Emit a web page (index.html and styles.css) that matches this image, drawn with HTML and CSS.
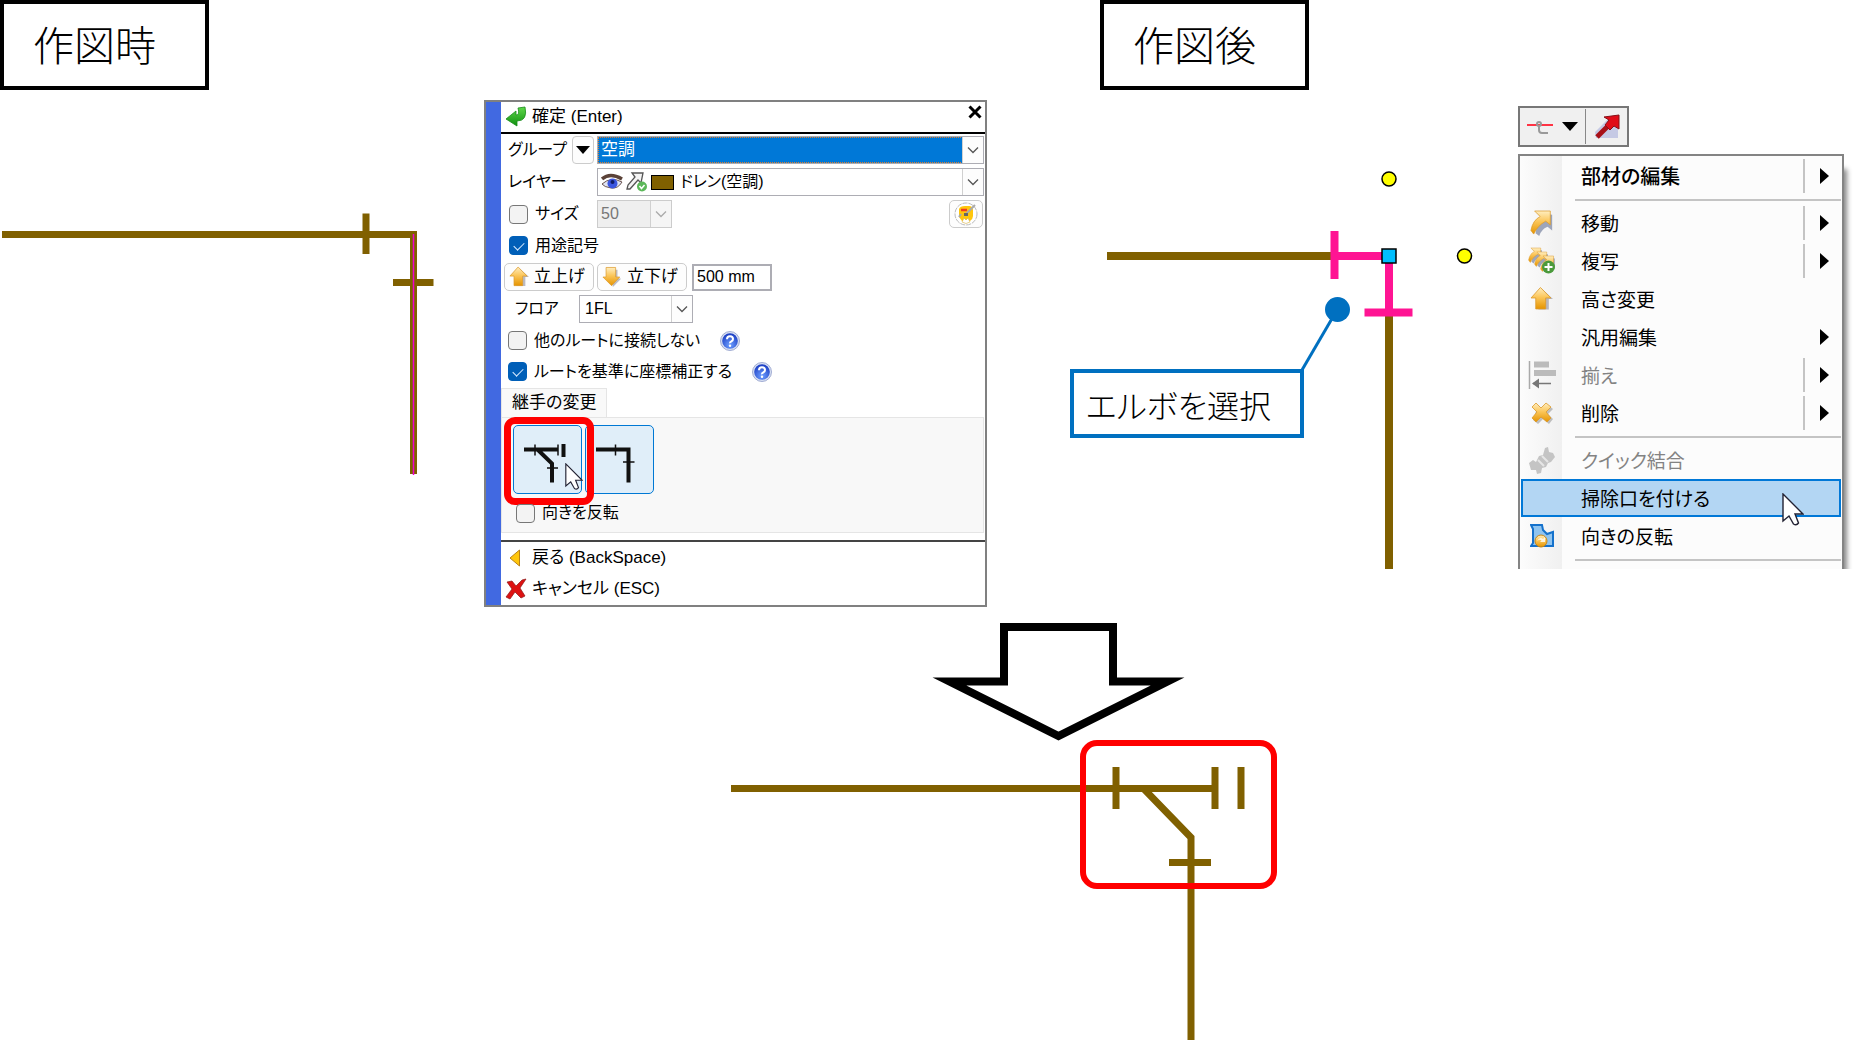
FILE: index.html
```html
<!DOCTYPE html>
<html lang="ja">
<head>
    <meta charset="UTF-8">
    <meta name="viewport" content="width=device-width, initial-scale=1.0">
    <title>掃除口を付ける</title>
    <link rel="stylesheet" href="styles.css">
</head>
<body>
    <!-- shared icons -->
    <svg class="defs" width="0" height="0">
        <defs>
            <linearGradient id="gold" x1="0" y1="0" x2="0" y2="1">
                <stop offset="0" stop-color="#ffeec0"/>
                <stop offset="0.45" stop-color="#fbc65a"/>
                <stop offset="1" stop-color="#e59400"/>
            </linearGradient>
            <linearGradient id="green" x1="0" y1="0" x2="0" y2="1">
                <stop offset="0" stop-color="#5fd84a"/>
                <stop offset="1" stop-color="#109010"/>
            </linearGradient>
            <radialGradient id="blue" cx="0.5" cy="0.75" r="0.7">
                <stop offset="0" stop-color="#6fa0ff"/>
                <stop offset="1" stop-color="#1c3fc4"/>
            </radialGradient>
            <symbol id="chevron" viewBox="0 0 12 8"><path d="M1 1.5l5 5 5-5" fill="none" stroke="currentColor" stroke-width="1.3"/></symbol>
            <symbol id="up" viewBox="0 0 22 24">
                <path d="M12 3l10 9h-4v10h-10z" fill="#8d8d9c" opacity="0.6"/>
                <path d="M10 1L1 11h4.500v10.500h9.500V11H20z" fill="url(#gold)" stroke="#dc9a2c" stroke-width="0.8"/>
            </symbol>
            <symbol id="down" viewBox="0 0 22 24">
                <path d="M8 4h9v9l4 1-9 9z" fill="#8d8d9c" opacity="0.6"/>
                <path d="M4.500 1.500H15V12h4.500L10.500 21.500 1 12h3.500z" fill="url(#gold)" stroke="#dc9a2c" stroke-width="0.8"/>
            </symbol>
            <symbol id="swoosh" viewBox="0 0 26 28">
                <path d="M7 3l17 2v17l-5-4q-7 3-9 10l-4-3q1-12 8-16z" fill="#8791ab" opacity="0.8"/>
                <path d="M5 1h17v15l-5-4Q8 17 4 26L1 22Q3 11 11 7z" fill="url(#gold)" stroke="#dc9a2c" stroke-width="0.8"/>
            </symbol>
            <symbol id="help" viewBox="0 0 20 20">
                <circle cx="10" cy="10" r="9.500" fill="#d9e0f4" stroke="#8d9bc8" stroke-width="0.8"/>
                <circle cx="10" cy="10" r="7.800" fill="url(#blue)"/>
                <path d="M7 8.200Q7 5.200 10 5.200T13 8q0 1.600-1.600 2.400T10 12.300" fill="none" stroke="#fff" stroke-width="2"/>
                <circle cx="10" cy="14.800" r="1.200" fill="#fff"/>
            </symbol>
            <symbol id="cursor" viewBox="0 0 22 34">
                <path d="M1 1v27l6-5 4.500 8q3 2 5-1l-3.500-9H21z" fill="#fff" stroke="#223" stroke-width="1.400"/>
            </symbol>
        </defs>
    </svg>

    <main class="page">
        <div class="top">
            <section class="before">
                <div class="drawing-col">
                    <h2 class="title">作図時</h2>
                    <svg class="pipe-before" width="440" height="385" viewBox="0 90 440 385">
                        <path class="pipe" d="M2 234.500H417M413.500 231V474M366 213.500v40.500M393 282.500h40.500"/>
                        <path d="M413.500 234v241" stroke="#f000d0" stroke-width="1.500"/>
                    </svg>
                </div>

                <form class="dialog">
                    <div class="dialog-bar"></div>
                    <div class="dialog-main">
                        <div class="dialog-head">
                            <button type="button" class="command">
                                <svg width="22" height="22" viewBox="0 0 22 22"><path d="M13 2l7-1q3 14-8 14v5L1 13l10-8v4q4 0 2-7z" fill="url(#green)" stroke="#178a18" stroke-width="0.8"/></svg>
                                確定 (Enter)
                            </button>
                            <button type="button" class="close" aria-label="閉じる">
                                <svg width="14" height="14" viewBox="0 0 14 14"><path d="M1.500 1.500l11 11M12.500 1.500l-11 11" stroke="#000" stroke-width="3"/></svg>
                            </button>
                        </div>

                        <div class="fields">
                            <div class="row">
                                <label class="name" for="group">グループ</label>
                                <button type="button" class="mini" aria-label="グループ一覧">
                                    <svg width="14" height="8" viewBox="0 0 14 8"><path d="M0 0h14L7 8z"/></svg>
                                </button>
                                <div class="combo combo-selected">
                                    <select id="group"><option>空調</option></select>
                                    <svg class="chev" width="12" height="8"><use href="#chevron"/></svg>
                                </div>
                            </div>
                            <div class="row">
                                <label class="name wide" for="layer">レイヤー</label>
                                <div class="combo combo-layer">
                                    <select id="layer"><option>ドレン(空調)</option></select>
                                    <span class="layer-icons">
                                        <svg width="22" height="18" viewBox="0 0 22 18">
                                            <path d="M1 6Q9-1 21 6" fill="none" stroke="#5b4238" stroke-width="3.500"/>
                                            <path d="M1 11Q10 3 21 9q-4 7-11 6T1 11z" fill="#dfe3f2" stroke="#6b5550"/>
                                            <circle cx="11.500" cy="10.500" r="5" fill="#3b56e0"/><circle cx="11.500" cy="9" r="2" fill="#101c66"/>
                                        </svg>
                                        <svg width="22" height="20" viewBox="0 0 22 20">
                                            <path d="M6 1h11l-2 10-3-3-8 9H1l1-4 7-8z" fill="#f4f4f4" stroke="#555" stroke-width="1.300"/>
                                            <circle cx="16" cy="14.500" r="5" fill="#5cb85a"/><path d="M13.500 14l2 2.500 3-3.500" fill="none" stroke="#fff" stroke-width="1.500"/>
                                        </svg>
                                        <i class="swatch"></i>
                                    </span>
                                    <svg class="chev" width="12" height="8"><use href="#chevron"/></svg>
                                </div>
                            </div>
                            <div class="row">
                                <label class="check size-check"><input type="checkbox">サイズ</label>
                                <div class="combo combo-size">
                                    <select disabled aria-label="サイズ"><option>50</option></select>
                                    <svg class="chev" width="12" height="8"><use href="#chevron"/></svg>
                                </div>
                                <button type="button" class="tool" aria-label="設定">
                                    <svg width="24" height="24" viewBox="0 0 24 24">
                                        <circle cx="12" cy="12" r="11" fill="#fff" stroke="#bbb" stroke-dasharray="5 1"/>
                                        <path d="M5 7q1-3 6-3h4q4 0 4 4v6q0 3-3 5H8l-3-4z" fill="#ffc60c"/>
                                        <path d="M8 20l2-4 2 2 2-2 2 4q-4 3-8 0z" fill="#fff" stroke="#d8b040" stroke-width="0.600"/>
                                        <path d="M7 8h6" stroke="#f03a20" stroke-width="2.500"/>
                                        <path d="M5 15l2-3M12 12L21 3" stroke="#aaa" stroke-width="2"/><path d="M10 11h4v3h-4z" fill="#666"/>
                                    </svg>
                                </button>
                            </div>
                            <div class="row row-check">
                                <label class="check"><input type="checkbox" checked>用途記号</label>
                            </div>
                            <div class="row row-buttons">
                                <button type="button" class="raise"><svg width="20" height="22"><use href="#up"/></svg>立上げ</button>
                                <button type="button" class="raise"><svg width="20" height="22"><use href="#down"/></svg>立下げ</button>
                                <input type="text" class="length" value="500 mm" aria-label="長さ">
                            </div>
                            <div class="row row-floor">
                                <label class="name" for="floor">フロア</label>
                                <div class="combo combo-floor">
                                    <select id="floor"><option>1FL</option></select>
                                    <svg class="chev" width="12" height="8"><use href="#chevron"/></svg>
                                </div>
                            </div>
                            <div class="row row-check row-help">
                                <label class="check"><input type="checkbox">他のルートに接続しない</label>
                                <svg width="20" height="20"><use href="#help"/></svg>
                            </div>
                            <div class="row row-check row-help">
                                <label class="check"><input type="checkbox" checked>ルートを基準に座標補正する</label>
                                <svg width="20" height="20"><use href="#help"/></svg>
                            </div>
                        </div>

                        <button type="button" class="tab">継手の変更</button>
                        <div class="panel">
                            <div class="joints">
                                <button type="button" class="joint" aria-label="掃除口付き">
                                    <svg width="66" height="66" viewBox="0 0 66 66" fill="none" stroke="#111">
                                        <path d="M10 22.500h34M24 23l14 13.500v19" stroke-width="4"/>
                                        <path d="M49.500 17v13" stroke-width="4"/>
                                        <path d="M21 17.500v11M44 17.500v11M33 41h11" stroke-width="1.500"/>
                                    </svg>
                                </button>
                                <button type="button" class="joint" aria-label="エルボ">
                                    <svg width="66" height="66" viewBox="0 0 66 66" fill="none" stroke="#111">
                                        <path d="M10 22.500h32.500v33" stroke-width="4"/>
                                        <path d="M29.500 17.500v11M37 35h11.500" stroke-width="1.500"/>
                                    </svg>
                                </button>
                                <span class="red-frame"></span>
                                <svg class="joint-cursor" width="18" height="28"><use href="#cursor"/></svg>
                            </div>
                            <label class="check"><input type="checkbox">向きを反転</label>
                        </div>

                        <div class="dialog-foot">
                            <button type="button" class="command">
                                <svg width="22" height="22" viewBox="0 0 22 22"><path d="M14.500 3v16L5 11z" fill="#ffc60c" stroke="#b98218"/></svg>
                                戻る (BackSpace)
                            </button>
                            <button type="button" class="command">
                                <svg width="22" height="22" viewBox="0 0 22 22"><path d="M2 4l5-1 4 5 6-6 4-1-6 9 5 8-4 2-6-6-5 7-4-2 6-8z" fill="#dd1212" stroke="#8d1515" stroke-width="0.700"/></svg>
                                キャンセル (ESC)
                            </button>
                        </div>
                    </div>
                </form>
            </section>

            <section class="after">
                <div class="drawing-col">
                    <h2 class="title title-after">作図後</h2>
                    <div class="canvas">
                        <svg width="440" height="479" viewBox="0 90 440 479">
                            <path d="M37 256H265M319 315V569" stroke="#806000" stroke-width="8"/>
                            <path d="M264.500 231v48M265 256H319M319 256v56M294.500 312.500h48" stroke="#ff1493" stroke-width="8"/>
                            <circle cx="319" cy="179" r="7" fill="#ff0" stroke="#000" stroke-width="1.500"/>
                            <circle cx="394.500" cy="256" r="7" fill="#ff0" stroke="#000" stroke-width="1.500"/>
                            <rect x="312" y="249" width="14" height="14" fill="#00bfff" stroke="#000" stroke-width="1.500"/>
                            <path d="M232 370l35-60" stroke="#0070c0" stroke-width="3"/>
                            <circle cx="267.500" cy="309.500" r="12.500" fill="#0070c0"/>
                        </svg>
                        <p class="callout">エルボを選択</p>
                    </div>
                </div>

                <div class="menu-col">
                    <div class="toolbar">
                        <button type="button" class="route" aria-label="ルート">
                            <svg width="26" height="20" viewBox="0 0 26 20" fill="none" stroke="#999" stroke-width="2">
                                <path d="M0 8h26" stroke="#f34" stroke-width="2"/><path d="M12 9v4q0 3 3 3h6"/><circle cx="12" cy="7" r="2"/>
                            </svg>
                            <svg width="16" height="10" viewBox="0 0 16 10"><path d="M0 0h16L8 9z"/></svg>
                        </button>
                        <button type="button" class="pointer" aria-label="選択">
                            <svg width="28" height="26" viewBox="0 0 28 26">
                                <path d="M2 18L16 4l9 4v16H3z" fill="#c5c9e4"/>
                                <path d="M4 23L17 10" stroke="#a81018" stroke-width="5"/><path d="M11 3l15-2v14l-5-3-4 4-5-5 4-5z" fill="#e00c18" stroke="#861018"/>
                            </svg>
                        </button>
                    </div>
                    <ul class="menu">
                        <li><button class="item strong"><span class="ico"></span>部材の編集<i class="split"></i><i class="arrow"></i></button></li>
                        <li class="sep"></li>
                        <li><button class="item"><span class="ico"><svg width="24" height="28"><use href="#swoosh"/></svg></span>移動<i class="split"></i><i class="arrow"></i></button></li>
                        <li><button class="item"><span class="ico">
                            <svg width="28" height="28" viewBox="0 0 28 28">
                                <use href="#swoosh" width="15" height="17"/><use href="#swoosh" x="6" y="4" width="15" height="17"/><use href="#swoosh" x="12" y="8" width="16" height="18"/>
                                <circle cx="20.500" cy="20" r="6.500" fill="#4b9a3c"/><path d="M16.500 20h8M20.500 16v8" stroke="#fff" stroke-width="2"/>
                            </svg></span>複写<i class="split"></i><i class="arrow"></i></button></li>
                        <li><button class="item"><span class="ico"><svg width="23" height="26"><use href="#up"/></svg></span>高さ変更</button></li>
                        <li><button class="item"><span class="ico"></span>汎用編集<i class="arrow"></i></button></li>
                        <li><button class="item" disabled><span class="ico">
                            <svg width="28" height="28" viewBox="0 0 28 28"><path d="M1.500 0v28" stroke="#aaa" stroke-width="1.500"/><path d="M6 3.500h15M6 12h22" stroke="#bbb" stroke-width="6"/><path d="M5 22.500h18" stroke="#777" stroke-width="1.500"/><path d="M4 22.500l7-5v10z" fill="#777"/></svg>
                            </span>揃え<i class="split"></i><i class="arrow"></i></button></li>
                        <li><button class="item"><span class="ico">
                            <svg width="22" height="22" viewBox="0 0 22 22"><path d="M7 3l5 5 5-5 5 4-5 5 5 5-4 5-6-5-5 5-5-4z" fill="#999" opacity="0.6"/><path d="M5 1l5 5 5-5 5 4-5 5 5 6-4 4-6-5-5 5-4-4 5-6-5-5z" fill="url(#gold)" stroke="#dc9a2c" stroke-width="0.800"/></svg>
                            </span>削除<i class="split"></i><i class="arrow"></i></button></li>
                        <li class="sep"></li>
                        <li><button class="item" disabled><span class="ico">
                            <svg width="28" height="28" viewBox="0 0 28 28" fill="#c4c4c4"><path d="M1 17l4-3 3 2 3-6 4-1 2-7 3-1 1 5 4 1 2 4-4 5-3 1-2 4-4 1-1 5-4 1-1-4-5 0z"/><path d="M10 14l6 6M14 10l6 6" stroke="#e6e6e6" stroke-width="2"/></svg>
                            </span>クイック結合</button></li>
                        <li><button class="item hot"><span class="ico"></span>掃除口を付ける</button>
                            <svg class="menu-cursor" width="22" height="34"><use href="#cursor"/></svg></li>
                        <li><button class="item"><span class="ico">
                            <svg width="24" height="24" viewBox="0 0 24 24"><path d="M1 1h11l1 5 4 4 6-2v14H1l2-3V5z" fill="#8fc4f0" stroke="#1471cc" stroke-width="2"/><circle cx="11" cy="17" r="6" fill="url(#gold)" stroke="#c88614"/><path d="M7 17q3-5 6-2l2-2v5h-5l1.500-1.500Q10 15 7 17z" fill="#fff" opacity="0.8"/></svg>
                            </span>向きの反転</button></li>
                        <li class="sep"></li>
                    </ul>
                </div>
            </section>
        </div>

        <section class="result">
            <svg class="big-arrow" width="256" height="120" viewBox="930 621 256 120">
                <path d="M1004 626h109v54.500h54.500L1058.500 735 949.500 680.500H1004z" fill="#fff" stroke="#000" stroke-width="8" stroke-miterlimit="10"/>
            </svg>
            <svg class="pipe-result" width="548" height="302" viewBox="731 738 548 302">
                <path class="pipe" d="M731 787.500H1216M1143 787l48 49.500V1040M1116 766v42M1215 766v42M1241 766v42M1169 861.500h42"/>
                <rect x="1083" y="742" width="191" height="143" rx="14" fill="none" stroke="#f00" stroke-width="6"/>
            </svg>
        </section>
    </main>
</body>
</html>
```
FILE: styles.css
```css
* {
    box-sizing: border-box;
}
body {
    margin: 0;
    background: #fff;
    color: #000;
    font-family: "Noto Sans CJK JP", sans-serif;
    font-feature-settings: "palt";
}
button, input, select {
    font: inherit;
    font-feature-settings: inherit;
    color: inherit;
    margin: 0;
}
button {
    white-space: nowrap;
}
svg {
    display: block;
    flex: none;
}
.defs {
    position: absolute;
}
.pipe {
    fill: none;
    stroke: #806000;
    stroke-width: 7;
}

/* page layout */
.top {
    display: grid;
    grid-template-columns: 1070fr 796fr;
}
.before, .after {
    display: flex;
    align-items: flex-start;
}
.drawing-col {
    flex: 1;
}
.title {
    width: 209px;
    height: 90px;
    margin: 0;
    padding-left: 29px;
    border: 4px solid #000;
    font-size: 41px;
    line-height: 78px;
    font-weight: 300;
    font-feature-settings: normal;
}
.title-after {
    margin-left: 30px;
}
.canvas {
    position: relative;
}
.callout {
    position: absolute;
    left: 0;
    top: 279px;
    width: 234px;
    height: 69px;
    margin: 0;
    padding-left: 12px;
    border: 4px solid #0070c0;
    background: #fff;
    font-size: 32px;
    line-height: 62px;
    font-weight: 300;
}

/* dialog */
.dialog {
    display: flex;
    width: 503px;
    margin: 100px 83px 0 0;
    border: 2px solid #808080;
    background: #fff;
    font-family: "Liberation Sans", "Noto Sans CJK JP", sans-serif;
    font-size: 16px;
    line-height: 20px;
}
.dialog-bar {
    width: 15px;
    background: #4169e1;
}
.dialog-main {
    flex: 1;
}
.dialog-head {
    display: flex;
    justify-content: space-between;
    align-items: center;
    height: 32px;
    border-bottom: 2px solid #000;
}
.command {
    display: flex;
    align-items: center;
    gap: 5px;
    height: 31px;
    padding: 0 4px;
    border: 0;
    background: none;
    font-size: 17px;
}
.close {
    align-self: flex-start;
    padding: 3px 3px;
    border: 0;
    background: none;
}
.fields {
    padding: 0 1px 1px 3px;
}
.row {
    display: flex;
    align-items: center;
    height: 32px;
}
.row-check {
    height: 31px;
    padding-left: 5px;
}
.name {
    width: 68px;
    padding-left: 4px;
}
.name.wide {
    width: 93px;
}
.mini {
    display: flex;
    align-items: center;
    justify-content: center;
    width: 22px;
    height: 28px;
    margin-right: 3px;
    padding: 0;
    border: 1px solid #ccc;
    border-radius: 4px;
    background: #fdfdfd;
}
.combo {
    position: relative;
    height: 28px;
}
.combo select {
    display: block;
    width: 100%;
    height: 100%;
    padding: 0 3px;
    border: 1px solid #adadb4;
    border-radius: 0;
    background: #fff;
    appearance: none;
}
.combo::after {
    content: "";
    position: absolute;
    top: 1px;
    right: 1px;
    bottom: 1px;
    width: 20px;
    border-left: 1px solid #d0d0d0;
    background: #fdfdfd;
}
.chev {
    position: absolute;
    z-index: 1;
    right: 5px;
    top: 10px;
    color: #555;
}
.combo-selected, .combo-layer {
    flex: 1;
}
.combo-selected select {
    background: #0078d7;
    color: #fff;
    font-size: 17px;
    outline: 1px dotted #e08030;
    outline-offset: -2px;
}
.combo-layer select {
    padding-left: 82px;
}
.layer-icons {
    position: absolute;
    left: 4px;
    top: 4px;
    display: flex;
    align-items: center;
    gap: 3px;
}
.swatch {
    width: 23px;
    height: 15px;
    border: 1px solid #000;
    background: #806000;
}
.size-check {
    width: 93px;
    padding-left: 5px;
}
.combo-size {
    width: 75px;
}
.combo-size select {
    background: #efefef;
    border-color: #ccc;
    color: #777;
    opacity: 1;
}
.combo-size::after {
    background: #f5f5f5;
}
.combo-size .chev {
    color: #aaa;
}
.tool {
    display: flex;
    align-items: center;
    justify-content: center;
    width: 34px;
    height: 28px;
    margin: 0 1px 0 auto;
    padding: 0;
    border: 1px solid #ccc;
    border-radius: 5px;
    background: #fdfdfd;
}
.check {
    display: flex;
    align-items: center;
    gap: 7px;
}
.check input {
    position: relative;
    width: 19px;
    height: 19px;
    border: 1px solid #777;
    border-radius: 4px;
    background: #f3f3f3;
    appearance: none;
}
.check input:checked {
    border-color: #005fb8;
    background: #005fb8;
}
.check input:checked::after {
    content: "";
    position: absolute;
    left: 4px;
    top: 5px;
    width: 9px;
    height: 5px;
    border: solid #d8ecff;
    border-width: 0 0 1px 1px;
    transform: rotate(-45deg);
}
.row-buttons {
    gap: 3px;
}
.raise {
    display: flex;
    align-items: center;
    gap: 5px;
    width: 90px;
    height: 28px;
    padding: 0 4px;
    border: 1px solid #ccc;
    border-radius: 5px;
    background: #fdfdfd;
    font-size: 17px;
}
.length {
    width: 80px;
    height: 27px;
    margin-left: 2px;
    padding: 0 3px;
    border: 2px solid #adadb4;
}
.row-floor {
    padding-left: 7px;
}
.combo-floor {
    width: 114px;
}
.combo-floor select {
    padding-left: 5px;
}
.row-help {
    gap: 20px;
    padding-left: 4px;
}
.tab {
    display: block;
    width: 106px;
    height: 29px;
    padding: 0 10px;
    border: 1px solid #e5e5e5;
    border-bottom: 0;
    background: #f9f9f9;
    font-size: 17px;
    text-align: left;
}
.panel {
    margin: 0 1px 7px 0;
    padding: 7px 11px 9px;
    border: 1px solid #e5e5e5;
    background: #f8f8f8;
}
.joints {
    position: relative;
    display: flex;
    gap: 3px;
}
.joint {
    width: 69px;
    height: 69px;
    padding: 0;
    border: 1px solid #0078d4;
    border-radius: 5px;
    background: #e0eef9;
}
.red-frame {
    position: absolute;
    left: -9px;
    top: -8px;
    width: 90px;
    height: 88px;
    border: 7px solid #f00;
    border-radius: 11px;
}
.joint-cursor {
    position: absolute;
    left: 52px;
    top: 38px;
}
.panel .check {
    padding: 9px 0 0 3px;
}
.dialog-foot {
    padding-bottom: 1px;
    border-top: 2px solid #444;
}

/* context menu */
.menu-col {
    width: 326px;
    margin: 106px 22px 0 0;
}
.toolbar {
    display: flex;
    align-items: center;
    width: 111px;
    height: 41px;
    margin-bottom: 7px;
    border: 2px solid #777;
    background: #f0f0f0;
}
.toolbar button {
    display: flex;
    align-items: center;
    height: 35px;
    padding: 0 7px;
    border: 0;
    background: none;
}
.route {
    gap: 9px;
}
.toolbar .pointer {
    border-left: 1px solid #888;
}
.menu {
    height: 415px;
    margin: 0;
    padding: 1px 1px 0;
    border: 2px solid #848484;
    border-bottom: 0;
    background: linear-gradient(90deg, #fcfcfc, #f0f0f0) 1px 0 / 41px 100% no-repeat #fcfcfc;
    box-shadow: 8px 10px 5px -5px #888;
    clip-path: inset(0 -12px 0 0);
    font-size: 19px;
    list-style: none;
}
.menu li {
    position: relative;
}
.item {
    display: flex;
    align-items: center;
    width: 100%;
    height: 38px;
    padding: 0 12px 0 0;
    border: 0;
    background: none;
    line-height: 28px;
}
.item:disabled {
    color: #838383;
}
.item.strong {
    font-size: 20px;
    font-weight: 500;
}
.item.hot {
    border: 2px solid #0078d7;
    background: #b3d6f3;
}
.item.hot .ico {
    margin-left: -2px;
}
.ico {
    display: flex;
    justify-content: center;
    width: 41px;
    margin-right: 19px;
}
.split {
    width: 2px;
    height: 34px;
    margin: 0 15px 0 auto;
    background: #c4c4c4;
}
.arrow {
    border: solid transparent;
    border-width: 8px 0 8px 9px;
    border-left-color: #000;
    margin-left: auto;
}
.split + .arrow {
    margin-left: 0;
}
.sep {
    height: 9px;
    padding: 4px 0 0 54px;
}
.sep::before {
    content: "";
    display: block;
    height: 2px;
    background: #c4c4c4;
}
.menu-cursor {
    position: absolute;
    right: 37px;
    top: 14px;
    z-index: 1;
}

/* result drawing */
.result {
    padding: 15px 0 0 39.180%;
}
.big-arrow {
    margin: 0 0 -3px 199px;
}
```
